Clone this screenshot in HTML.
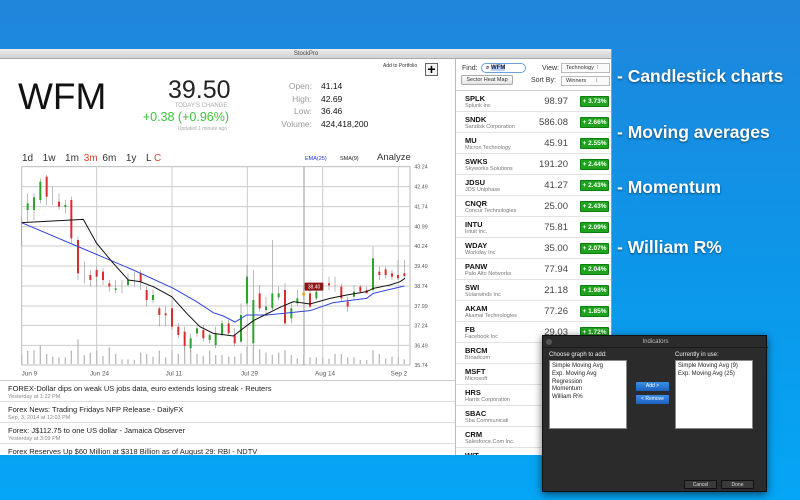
<!DOCTYPE html>
<html><head><meta charset="utf-8"><style>
*{margin:0;padding:0;box-sizing:border-box}
body{width:800px;height:500px;overflow:hidden;position:relative;background:linear-gradient(180deg,#1f86dc 0%,#0c97ea 55%,#05a6f5 100%);font-family:"Liberation Sans",sans-serif}
.a{position:absolute;white-space:nowrap}
#win{position:absolute;left:0;top:49px;width:612px;height:406px;background:#fff;overflow:hidden;border-right:1px solid #999}
#tb{position:absolute;left:0;top:0;width:612px;height:10px;background:linear-gradient(#ececec,#d2d2d2);border-bottom:1px solid #aaa;font-size:6px;color:#444;text-align:center;line-height:10px}
.side{position:absolute;left:455px;top:10px;width:157px;height:396px;background:#fff;border-left:1px solid #bbb}
.row{position:absolute;left:0;width:157px;height:21px;border-bottom:1px solid #e2e2e2}
.row b{position:absolute;left:9px;top:3px;font-size:7.5px;color:#111}
.row i{position:absolute;left:9px;top:12px;font-size:5.5px;color:#777;font-style:normal}
.row s{position:absolute;right:45px;top:5px;font-size:9.5px;color:#444;text-decoration:none}
.row u{position:absolute;left:124px;top:5px;width:29px;height:11px;background:#1fa31f;border:1px solid #0d7d0d;color:#fff;font-size:6.5px;font-weight:bold;text-decoration:none;text-align:center;line-height:9px;border-radius:1px}
.news{position:absolute;left:0;width:455px;height:21px;border-bottom:1px solid #ddd}
.news b{position:absolute;left:8px;top:3px;font-size:7.5px;font-weight:normal;color:#222}
.news i{position:absolute;left:8px;top:13px;font-size:5.5px;color:#888;font-style:normal}
.rt{position:absolute;left:617px;color:#fff;font-weight:bold;font-size:17.5px;text-shadow:0 1px 2px rgba(0,0,0,.5)}
#dlg{position:absolute;left:542px;top:335px;width:225px;height:157px;background:#2b2b2b;border:1px solid #111;box-shadow:0 2px 8px rgba(0,0,0,.6)}
.lb{position:absolute;top:24px;width:78px;height:69px;background:#fff;border:1px solid #888;font-size:6px;color:#222;padding:2px 2px;line-height:7.8px}
.bt{position:absolute;width:33px;height:9px;font-size:5px;color:#fff;text-align:center;line-height:9px;border-radius:1px}
</style></head><body>
<div class="rt" style="top:66px">- Candlestick charts</div>
<div class="rt" style="top:122px">- Moving averages</div>
<div class="rt" style="top:177px">- Momentum</div>
<div class="rt" style="top:237px">- William R%</div>

<div id="win">
<div id="tb">StockPro</div>
<div class="a" style="left:18px;top:27px;font-size:37px;color:#111">WFM</div>
<div class="a" style="left:168px;top:27px;font-size:25px;color:#222;width:61px;text-align:right">39.50</div>
<div class="a" style="left:150px;top:54px;font-size:6px;color:#aaa;width:79px;text-align:right">TODAY'S CHANGE:</div>
<div class="a" style="left:140px;top:61px;font-size:12.5px;color:#3bc43b;width:89px;text-align:right">+0.38 (+0.96%)</div>
<div class="a" style="left:150px;top:77px;font-size:5px;color:#aaa;width:77px;text-align:right">Updated 1 minute ago</div>
<div class="a" style="left:260px;top:31px;width:52px;text-align:right;font-size:8.5px;color:#999;line-height:12.5px">Open:<br>High:<br>Low:<br>Volume:</div>
<div class="a" style="left:321px;top:31px;font-size:8.5px;color:#111;line-height:12.5px">41.14<br>42.69<br>36.46<br>424,418,200</div>
<div class="a" style="left:383px;top:14px;font-size:5px;color:#333">Add to Portfolio</div>
<div class="a" style="left:425px;top:14px;width:13px;height:13px;border:1px solid #666;background:#f4f4f4;font-size:14px;font-weight:bold;line-height:11px;text-align:center;color:#000">+</div>
<div class="a" style="left:22px;top:104px;font-size:10px;color:#333;word-spacing:2px">1d&nbsp; 1w&nbsp; 1m <span style="color:#e0442a">3m</span> 6m&nbsp; 1y</div>
<div class="a" style="left:146px;top:104px;font-size:10px;color:#333">L <span style="color:#e0442a">C</span></div>
<div class="a" style="left:305px;top:107px;font-size:5.5px;color:#2233dd">EMA(25)</div>
<div class="a" style="left:340px;top:107px;font-size:5.5px;color:#222">SMA(9)</div>
<div class="a" style="left:377px;top:103px;font-size:9.5px;color:#333">Analyze</div>

<svg class="a" style="left:0;top:111px" width="455" height="225" viewBox="0 0 1365 675">
<g stroke="#ccc" stroke-width="3" fill="none">
<rect x="65" y="20" width="1165" height="595" stroke="#bbb"/>
<path d="M65 80H1230M65 140H1230M65 200H1230M65 258H1230M65 318H1230M65 378H1230M65 438H1230M65 496H1230M65 556H1230"/>
<path d="M290 20V615M516 20V615M742 20V615M968 20V615M1195 20V615"/>
<path d="M912 20V615" stroke="#999"/>
</g>
<g font-size="16" fill="#555" font-family="Liberation Sans">
<text x="1243" y="26">43.24</text><text x="1243" y="86">42.49</text><text x="1243" y="146">41.74</text><text x="1243" y="206">40.99</text><text x="1243" y="264">40.24</text><text x="1243" y="324">39.49</text><text x="1243" y="384">38.74</text><text x="1243" y="444">37.99</text><text x="1243" y="502">37.24</text><text x="1243" y="562">36.49</text><text x="1243" y="621">35.74</text>
<text x="65" y="646" font-size="19">Jun 9</text><text x="270" y="646" font-size="19">Jun 24</text><text x="497" y="646" font-size="19">Jul 11</text><text x="723" y="646" font-size="19">Jul 29</text><text x="945" y="646" font-size="19">Aug 14</text><text x="1172" y="646" font-size="19">Sep 2</text>
</g>
<g stroke="#bbb" stroke-width="4">
<path d="M65 585V612M83 572V612M102 570V612M121 556V612M140 582V612M158 590V612M177 592V612M196 592V612M214 572V612M234 538V612M253 585V612M271 578V612M290 572V612M309 588V612M328 562V612M347 582V612M366 598V612M384 598V612M403 600V612M422 578V612M440 582V612M459 590V612M478 572V612M497 592V612M516 570V612M535 582V612M554 560V612M572 570V612M591 582V612M610 588V612M629 572V612M647 585V612M666 585V612M686 590V612M704 590V612M723 580V612M741 560V612M760 560V612M779 568V612M798 578V612M817 585V612M836 578V612M855 570V612M874 585V612M892 595V612M911 588V612M930 592V612M949 592V612M968 592V612M987 596V612M1005 582V612M1024 582V612M1043 592V612M1062 592V612M1081 600V612M1100 600V612M1119 570V612M1138 582V612M1157 596V612M1176 590V612M1195 592V612M1213 598V612"/>
</g>
<g stroke="#999" stroke-width="2">
<path d="M65 170V258M83 100V185M102 100V180M121 55V130M140 45V135M158 80V135M177 100V150M196 120V160M214 110V250M234 230V360M253 305V370M271 330V380M290 320V380M309 325V375M328 360V395M347 360V400M366 360V400M384 340V380M403 335V380M422 330V390M440 380V440M459 390V430M478 440V500M497 440V500M516 420V510M535 490V535M554 500V570M572 520V575M591 495V530M610 495V545M629 520V550M647 500V565M666 480V530M686 480V525M704 505V560M723 430V550M741 315V440M760 330V560M779 375V455M798 410V470M817 240V450M836 380V420M855 370V495M874 430V490M892 390V440M911 380V420M930 390V445M949 370V420M987 350V390M1005 350V395M1024 370V425M1043 410V455M1062 375V420M1081 375V400M1100 380V400M1119 260V395M1138 320V360M1157 320V355M1176 330V360M1194 300V360M1213 300V355"/>
</g>
<g stroke-width="0">
<g fill="#2aa52a">
<rect x="80" y="130" width="6" height="20"/><rect x="99" y="112" width="6" height="38"/><rect x="118" y="65" width="6" height="55"/><rect x="193" y="135" width="6" height="6"/><rect x="344" y="385" width="6" height="5"/><rect x="381" y="360" width="6" height="15"/><rect x="456" y="405" width="6" height="15"/><rect x="569" y="535" width="6" height="30"/><rect x="588" y="505" width="6" height="15"/><rect x="626" y="525" width="6" height="15"/><rect x="644" y="520" width="6" height="35"/><rect x="663" y="490" width="6" height="35"/><rect x="720" y="465" width="6" height="80"/><rect x="738" y="350" width="6" height="80"/><rect x="757" y="420" width="6" height="130"/><rect x="795" y="440" width="6" height="10"/><rect x="814" y="400" width="6" height="45"/><rect x="833" y="400" width="6" height="12"/><rect x="871" y="445" width="6" height="30"/><rect x="889" y="415" width="6" height="15"/><rect x="946" y="395" width="6" height="20"/><rect x="1059" y="395" width="6" height="15"/><rect x="1116" y="295" width="6" height="95"/>
</g>
<g fill="#dd2b2b">
<rect x="137" y="50" width="6" height="60"/><rect x="174" y="125" width="6" height="15"/><rect x="211" y="120" width="6" height="115"/><rect x="231" y="240" width="6" height="100"/><rect x="268" y="345" width="6" height="15"/><rect x="287" y="330" width="6" height="20"/><rect x="306" y="335" width="6" height="25"/><rect x="325" y="370" width="6" height="10"/><rect x="419" y="340" width="6" height="25"/><rect x="437" y="390" width="6" height="30"/><rect x="475" y="445" width="6" height="20"/><rect x="494" y="460" width="6" height="6"/><rect x="513" y="445" width="6" height="55"/><rect x="532" y="500" width="6" height="25"/><rect x="551" y="515" width="6" height="43"/><rect x="607" y="510" width="6" height="25"/><rect x="683" y="490" width="6" height="30"/><rect x="701" y="525" width="6" height="25"/><rect x="776" y="400" width="6" height="45"/><rect x="852" y="390" width="6" height="100"/><rect x="927" y="400" width="6" height="40"/><rect x="984" y="370" width="6" height="6"/><rect x="1021" y="380" width="6" height="35"/><rect x="1040" y="425" width="6" height="15"/><rect x="1078" y="380" width="6" height="15"/><rect x="1097" y="390" width="6" height="10"/><rect x="1135" y="335" width="6" height="10"/><rect x="1154" y="328" width="6" height="17"/><rect x="1173" y="340" width="6" height="10"/><rect x="1191" y="345" width="6" height="10"/><rect x="1210" y="340" width="6" height="8"/>
</g>
</g>
<path d="M65 188L230 258L400 330L520 385L590 425L640 458L670 468L705 486L740 465L800 465L850 460L900 455L930 452L1000 428L1060 420L1100 415L1120 400L1170 388L1213 378" stroke="#3344dd" stroke-width="3" fill="none"/>
<path d="M65 188L250 178L290 250L340 310L385 360L420 365L460 380L515 410L560 460L600 500L640 520L700 528L730 505L760 482L800 462L840 442L880 425L930 432L990 415L1040 405L1100 395L1120 385L1170 375L1200 365L1215 355" stroke="#111" stroke-width="3" fill="none"/>
<rect x="914" y="368" width="56" height="24" fill="#8a1616" rx="2"/>
<text x="942" y="386" font-size="15" fill="#fff" text-anchor="middle" font-family="Liberation Sans">38.40</text>
<circle cx="911" cy="402" r="5" fill="#e8b020"/>
</svg>

<div style="position:absolute;left:0;top:331px;width:455px;height:1px;background:#ccc"></div>
<div class="news" style="top:332px"><b>FOREX-Dollar dips on weak US jobs data, euro extends losing streak - Reuters</b><i>Yesterday at 1:22 PM</i></div>
<div class="news" style="top:353px"><b>Forex News: Trading Fridays NFP Release - DailyFX</b><i>Sep, 3, 2014 at 12:03 PM</i></div>
<div class="news" style="top:374px"><b>Forex: J$112.75 to one US dollar - Jamaica Observer</b><i>Yesterday at 3:09 PM</i></div>
<div class="news" style="top:395px"><b>Forex Reserves Up $60 Million at $318 Billion as of August 29: RBI - NDTV</b></div>

<div class="side">
<div class="a" style="left:6px;top:6px;font-size:7px;color:#333">Find:</div>
<div class="a" style="left:25px;top:4px;width:45px;height:10px;border:1px solid #6aa0e0;border-radius:5px;font-size:6px;line-height:8px;padding-left:4px;font-weight:bold;color:#223;background:#fff">⌕ <span style="background:#b5d3ff">WFM</span></div>
<div class="a" style="left:86px;top:6px;font-size:7px;color:#333">View:</div>
<div class="a" style="left:105px;top:4px;width:49px;height:10px;border:1px solid #bbb;font-size:5.5px;line-height:9px;padding-left:4px;color:#333;background:#fafafa">Technology&nbsp; ⁝</div>
<div class="a" style="left:5px;top:16px;width:52px;height:10px;border:1px solid #aaa;border-radius:2px;font-size:5.5px;line-height:8px;text-align:center;color:#333;background:linear-gradient(#fff,#e4e4e4)">Sector Heat Map</div>
<div class="a" style="left:75px;top:18px;font-size:7px;color:#333">Sort By:</div>
<div class="a" style="left:105px;top:17px;width:49px;height:10px;border:1px solid #bbb;font-size:5.5px;line-height:9px;padding-left:4px;color:#333;background:#fafafa">Winners&nbsp;&nbsp;&nbsp;&nbsp;&nbsp; ⁝</div>
<div style="position:absolute;left:0;top:31px;width:157px;height:1px;background:#ccc"></div>
<div class="row" style="top:32px"><b>SPLK</b><i>Splunk Inc</i><s>98.97</s><u>+ 3.73%</u></div>
<div class="row" style="top:53px"><b>SNDK</b><i>Sandisk Corporation</i><s>586.08</s><u>+ 2.66%</u></div>
<div class="row" style="top:74px"><b>MU</b><i>Micron Technology</i><s>45.91</s><u>+ 2.55%</u></div>
<div class="row" style="top:95px"><b>SWKS</b><i>Skyworks Solutions</i><s>191.20</s><u>+ 2.44%</u></div>
<div class="row" style="top:116px"><b>JDSU</b><i>JDS Uniphase</i><s>41.27</s><u>+ 2.43%</u></div>
<div class="row" style="top:137px"><b>CNQR</b><i>Concur Technologies</i><s>25.00</s><u>+ 2.43%</u></div>
<div class="row" style="top:158px"><b>INTU</b><i>Intuit Inc.</i><s>75.81</s><u>+ 2.09%</u></div>
<div class="row" style="top:179px"><b>WDAY</b><i>Workday Inc</i><s>35.00</s><u>+ 2.07%</u></div>
<div class="row" style="top:200px"><b>PANW</b><i>Palo Alto Networks</i><s>77.94</s><u>+ 2.04%</u></div>
<div class="row" style="top:221px"><b>SWI</b><i>Solarwinds Inc</i><s>21.18</s><u>+ 1.98%</u></div>
<div class="row" style="top:242px"><b>AKAM</b><i>Akamai Technologies</i><s>77.26</s><u>+ 1.85%</u></div>
<div class="row" style="top:263px"><b>FB</b><i>Facebook Inc</i><s>29.03</s><u>+ 1.72%</u></div>
<div class="row" style="top:284px"><b>BRCM</b><i>Broadcom</i></div>
<div class="row" style="top:305px"><b>MSFT</b><i>Microsoft</i></div>
<div class="row" style="top:326px"><b>HRS</b><i>Harris Corporation</i></div>
<div class="row" style="top:347px"><b>SBAC</b><i>Sba Communicati</i></div>
<div class="row" style="top:368px"><b>CRM</b><i>Salesforce.Com Inc.</i></div>
<div class="row" style="top:389px"><b>WIT</b></div>
</div>
</div>

<div id="dlg">
<div class="a" style="left:3px;top:3px;width:6px;height:6px;border-radius:3px;background:#555"></div>
<div class="a" style="left:0;top:3px;width:225px;text-align:center;font-size:6px;color:#bbb">Indicators</div>
<div style="position:absolute;left:0;top:11px;width:225px;height:1px;background:#1a1a1a"></div>
<div class="a" style="left:6px;top:16px;font-size:6px;color:#eee">Choose graph to add:</div>
<div class="a" style="left:132px;top:16px;font-size:6px;color:#eee">Currently in use:</div>
<div class="lb" style="left:6px">Simple Moving Avg<br>Exp. Moving Avg<br>Regression<br>Momentum<br>William R%</div>
<div class="lb" style="left:132px">Simple Moving Avg (9)<br>Exp. Moving Avg (25)</div>
<div class="bt" style="left:93px;top:46px;background:linear-gradient(#3b8fe6,#1a62c0)">Add &gt;</div>
<div class="bt" style="left:93px;top:59px;background:linear-gradient(#3b8fe6,#1a62c0)">&lt; Remove</div>
<div class="bt" style="left:141px;top:144px;background:#3a3a3a;border:1px solid #111;color:#ddd">Cancel</div>
<div class="bt" style="left:178px;top:144px;background:#3a3a3a;border:1px solid #111;color:#ddd">Done</div>
</div>
</body></html>
